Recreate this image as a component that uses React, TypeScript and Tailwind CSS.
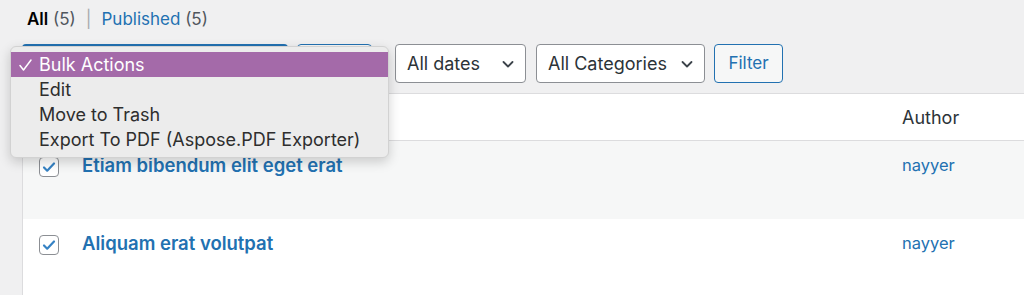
import React from "react";

const Chevron = () => (
  <svg width="14" height="14" viewBox="0 0 14 14" fill="none">
    <path d="M2.5 5l4.5 4.5L11.5 5" stroke="#3c434a" strokeWidth="1.8" strokeLinecap="round" strokeLinejoin="round" />
  </svg>
);

const Checkbox = () => (
  <div className="w-[20px] h-[20px] rounded-[4px] border border-[#8c8f94] bg-white flex items-center justify-center">
    <svg width="16" height="16" viewBox="0 0 16 16" fill="none">
      <path d="M3 8.5l3.2 3.2L13 4.5" stroke="#3582c4" strokeWidth="2.2" strokeLinecap="round" strokeLinejoin="round" />
    </svg>
  </div>
);

const rows = [
  { title: "Etiam bibendum elit eget erat", bg: "bg-[#f6f7f7]" },
  { title: "Aliquam erat volutpat", bg: "bg-white" },
];

export default function App() {
  return (
    <div
      className="relative w-[1024px] h-[295px] overflow-hidden bg-[#f0f0f1] text-[#1d2327]"
      style={{ fontFamily: "Inter, 'Noto Sans', sans-serif" }}
    >
      <div className="h-[44px] pl-[27px] pt-[8px] text-[17px] leading-[22px]">
        <span className="font-semibold text-black">All</span>{" "}
        <span className="text-[#50575e]">(5)</span>
        <span className="text-[#a7aaad] px-[10px]">|</span>
        <span className="text-[#2271b1]">Published</span>{" "}
        <span className="text-[#50575e]">(5)</span>
      </div>

      <div className="flex items-center h-[39px] pl-[22px] text-[18px]">
        <div className="w-[266px] h-[39px] rounded-[4px] border-2 border-[#2271b1] bg-white" />
        <div className="ml-[9px] w-[75px] h-[39px] rounded-[4px] border border-[#2271b1] bg-[#f6f7f7]" />
        <div className="ml-[23px] w-[131px] h-[39px] rounded-[4px] border border-[#8c8f94] bg-white flex items-center justify-between pl-[11px] pr-[10px] text-[#2c3338]">
          <span>All dates</span>
          <Chevron />
        </div>
        <div className="ml-[10px] w-[169px] h-[39px] rounded-[4px] border border-[#8c8f94] bg-white flex items-center justify-between pl-[11px] pr-[10px] text-[#2c3338]">
          <span>All Categories</span>
          <Chevron />
        </div>
        <div className="ml-[9px] w-[69px] h-[39px] rounded-[4px] border border-[#2271b1] bg-[#f6f7f7] flex items-center justify-center text-[#2271b1] text-[17px]">
          Filter
        </div>
      </div>

      <div className="ml-[22px] mt-[10px] border-l border-t border-[#dcdcde] bg-white">
        <div className="h-[47px] border-b border-[#dcdcde] flex items-center">
          <div className="w-[879px]" />
          <span className="text-[18px] text-[#2c3338]">Author</span>
        </div>
        {rows.map((r) => (
          <div key={r.title} className={`flex h-[78px] ${r.bg}`}>
            <div className="pl-[16px] pt-[16px] w-[59px]">
              <Checkbox />
            </div>
            <div className="w-[820px] pt-[12px] text-[18.5px] font-semibold text-[#2271b1] leading-[24px]">
              {r.title}
            </div>
            <div className="pt-[12px] text-[16.5px] text-[#2271b1] leading-[24px]">nayyer</div>
          </div>
        ))}
      </div>

      <div className="absolute left-[10px] top-[46px] w-[379px] py-[5px] rounded-[6px] bg-[#ececec] border border-[#d2d2d2] shadow-[0_4px_12px_rgba(0,0,0,0.18)] text-[18px] text-[#2e2e2e]">
        <div className="h-[25px] flex items-center bg-[#a46aa9] text-white">
          <span className="w-[28px] pl-[8px] flex items-center">
            <svg width="13" height="12" viewBox="0 0 13 12" fill="none">
              <path d="M1 6.5l3.5 4.5L12 1" stroke="white" strokeWidth="1.5" strokeLinecap="round" strokeLinejoin="round" />
            </svg>
          </span>
          <span>Bulk Actions</span>
        </div>
        {["Edit", "Move to Trash", "Export To PDF (Aspose.PDF Exporter)"].map((t) => (
          <div key={t} className="h-[25px] flex items-center pl-[28px]">
            {t}
          </div>
        ))}
      </div>
    </div>
  );
}
